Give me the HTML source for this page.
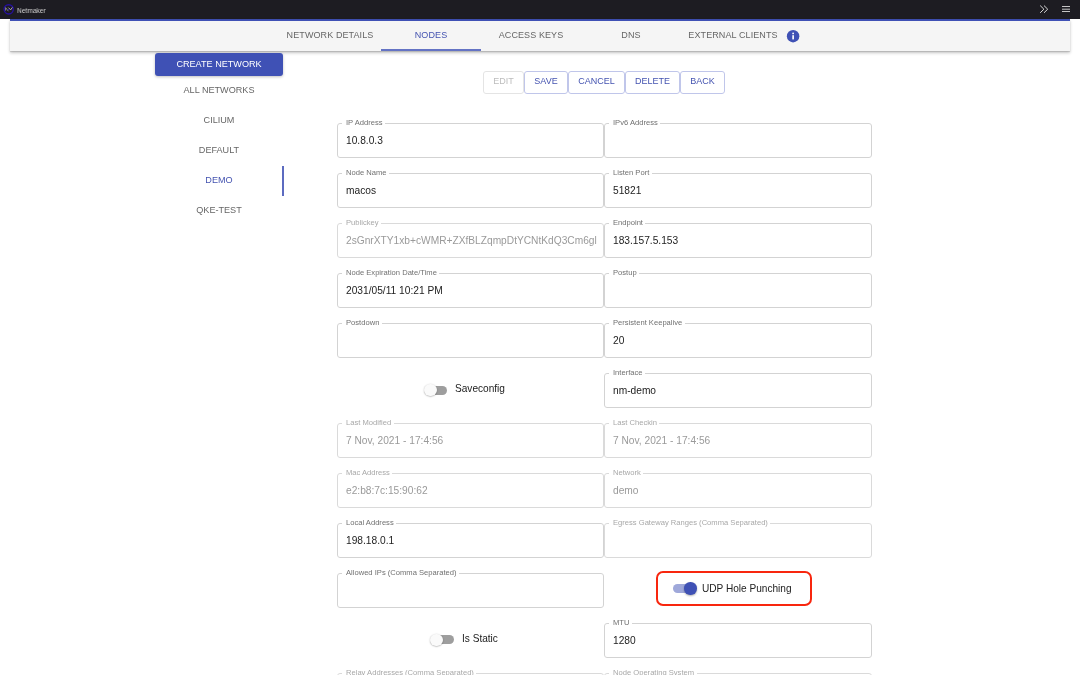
<!DOCTYPE html>
<html><head><meta charset="utf-8">
<style>
*{box-sizing:border-box;margin:0;padding:0}
html,body{width:1080px;height:675px;overflow:hidden;background:#fff;font-family:"Liberation Sans",sans-serif;position:relative}
.fld,.tab,.side,.btn,.swlbl,#brand,#createbtn{will-change:transform}
.abs{position:absolute}
#topbar{left:0;top:0;width:1080px;height:18.8px;background:#1d1c22}
#brand{left:17px;top:5.5px;font-size:7.8px;color:#d0d0d0;line-height:10px;transform:scaleX(0.85);transform-origin:0 0}
#tabs{left:10px;top:18.7px;width:1060px;height:32.3px;background:linear-gradient(#3a4aa8 0px,#3f51b5 1.2px,#3f51b5 1.6px,#f5f5f5 2.4px);box-shadow:0 2px 3px rgba(0,0,0,0.22),0 1px 1px rgba(0,0,0,0.12)}
.tab{position:absolute;top:12px;font-size:9px;line-height:10px;color:#666;letter-spacing:0.1px;white-space:nowrap;text-align:center}
#ul{left:381px;top:49px;width:100px;height:2px;background:#6473c4}
#createbtn{left:155px;top:53px;width:128px;height:22.7px;background:#3f51b5;border-radius:3px;color:#fff;font-size:9.1px;line-height:22.4px;text-align:center;box-shadow:0 1px 3px rgba(0,0,0,0.25)}
.side{position:absolute;left:155px;width:128px;text-align:center;font-size:9.1px;color:#666;line-height:10px}
#ind{left:282px;top:166px;width:2px;height:30px;background:#5c6bc0}
.btn{position:absolute;top:71px;height:23px;border:1px solid #c0c6ea;border-radius:3px;color:#4453b0;font-size:9px;line-height:19.6px;text-align:center}
.btn.dis{border-color:#e4e4e4;color:#bdbdbd}
.fld{position:absolute;height:35px;border:1px solid #d3d3d3;border-radius:3px}
.fld .lb{position:absolute;left:4px;top:-6px;padding:0 2.5px 0 4px;background:#fff;font-size:7.6px;line-height:9px;color:#707070;white-space:nowrap}
.fld .v{position:absolute;left:8px;top:11px;font-size:10.2px;line-height:12px;color:#222;white-space:nowrap}
.fld.dis{border-color:#dadada}
.fld.dis .lb{color:#a8a8a8}
.fld.dis .v{color:#9a9a9a}
.L{left:337px;width:267px}
.R{left:604px;width:268px}
.sw{position:absolute}
.sw .tr{position:absolute;height:9px;border-radius:5px}
.sw .th{position:absolute;width:12.5px;height:12.5px;border-radius:50%}
.swlbl{position:absolute;font-size:10.1px;line-height:12px;color:#222;white-space:nowrap}
</style></head><body>
<div id="topbar" class="abs"></div>
<svg class="abs" style="left:0;top:0" width="18" height="18" viewBox="0 0 18 18">
  <circle cx="8.7" cy="9.35" r="4.6" fill="none" stroke="#2610a0" stroke-width="1.4"/>
  <path d="M5.6 10.6 L5.6 7.6 L8.4 11.2" fill="none" stroke="#8a8a8a" stroke-width="0.9"/>
  <path d="M8.4 7.6 L10.6 9.9 L12.4 7.4" fill="none" stroke="#b8b8b8" stroke-width="0.9"/>
  <circle cx="8.6" cy="9.5" r="0.8" fill="#2610a0"/>
</svg>
<div id="brand" class="abs">Netmaker</div>
<svg class="abs" style="left:1038px;top:4px" width="12" height="11" viewBox="0 0 12 11">
  <path d="M2.2 1.6 L5.9 5.2 L2.2 8.8 M6 1.6 L9.7 5.2 L6 8.8" fill="none" stroke="#e0e0e0" stroke-width="0.95"/>
</svg>
<svg class="abs" style="left:1061px;top:4px" width="10" height="10" viewBox="0 0 10 10">
  <path d="M1 2.5 H9 M1 5.2 H9 M1 7.5 H9" fill="none" stroke="#d8d8d8" stroke-width="0.9"/>
</svg>

<div id="tabs" class="abs"></div>
<div class="tab" style="left:280px;top:30px;width:100px">NETWORK DETAILS</div>
<div class="tab" style="left:381px;top:30px;width:100px;color:#4453b0">NODES</div>
<div class="tab" style="left:481px;top:30px;width:100px">ACCESS KEYS</div>
<div class="tab" style="left:581px;top:30px;width:100px">DNS</div>
<div class="tab" style="left:681px;top:30px;width:104px">EXTERNAL CLIENTS</div>
<svg class="abs" style="left:786px;top:28.5px" width="14" height="14" viewBox="0 0 14 14">
  <circle cx="7.1" cy="7.2" r="6.25" fill="#3f51b5"/>
  <rect x="6.3" y="6.2" width="1.65" height="4.2" fill="#fff"/>
  <circle cx="7.12" cy="4.4" r="0.9" fill="#fff"/>
</svg>
<div id="ul" class="abs"></div>

<div id="createbtn" class="abs">CREATE NETWORK</div>
<div class="side" style="top:85px">ALL NETWORKS</div>
<div class="side" style="top:115px">CILIUM</div>
<div class="side" style="top:145px">DEFAULT</div>
<div class="side" style="top:175px;color:#4453b0">DEMO</div>
<div class="side" style="top:205px">QKE-TEST</div>
<div id="ind" class="abs"></div>

<div class="btn dis" style="left:483px;width:41px">EDIT</div>
<div class="btn" style="left:524px;width:44px">SAVE</div>
<div class="btn" style="left:568px;width:57px">CANCEL</div>
<div class="btn" style="left:625px;width:55px">DELETE</div>
<div class="btn" style="left:680px;width:45px">BACK</div>

<!-- fields -->
<div class="fld L" style="top:123px"><span class="lb">IP Address</span><span class="v">10.8.0.3</span></div>
<div class="fld R" style="top:123px"><span class="lb">IPv6 Address</span></div>
<div class="fld L" style="top:173px"><span class="lb">Node Name</span><span class="v">macos</span></div>
<div class="fld R" style="top:173px"><span class="lb">Listen Port</span><span class="v">51821</span></div>
<div class="fld L dis" style="top:223px"><span class="lb">Publickey</span><span class="v">2sGnrXTY1xb+cWMR+ZXfBLZqmpDtYCNtKdQ3Cm6gl</span></div>
<div class="fld R" style="top:223px"><span class="lb">Endpoint</span><span class="v">183.157.5.153</span></div>
<div class="fld L" style="top:273px"><span class="lb">Node Expiration Date/Time</span><span class="v">2031/05/11 10:21 PM</span></div>
<div class="fld R" style="top:273px"><span class="lb">Postup</span></div>
<div class="fld L" style="top:323px"><span class="lb">Postdown</span></div>
<div class="fld R" style="top:323px"><span class="lb">Persistent Keepalive</span><span class="v">20</span></div>
<div class="fld R" style="top:373px"><span class="lb">Interface</span><span class="v">nm-demo</span></div>
<div class="fld L dis" style="top:423px"><span class="lb">Last Modified</span><span class="v">7 Nov, 2021 - 17:4:56</span></div>
<div class="fld R dis" style="top:423px"><span class="lb">Last Checkin</span><span class="v">7 Nov, 2021 - 17:4:56</span></div>
<div class="fld L dis" style="top:473px"><span class="lb">Mac Address</span><span class="v">e2:b8:7c:15:90:62</span></div>
<div class="fld R dis" style="top:473px"><span class="lb">Network</span><span class="v">demo</span></div>
<div class="fld L" style="top:523px"><span class="lb">Local Address</span><span class="v">198.18.0.1</span></div>
<div class="fld R dis" style="top:523px"><span class="lb">Egress Gateway Ranges (Comma Separated)</span></div>
<div class="fld L" style="top:573px"><span class="lb">Allowed IPs (Comma Separated)</span></div>
<div class="fld R" style="top:623px"><span class="lb">MTU</span><span class="v">1280</span></div>
<div class="fld L dis" style="top:673px"><span class="lb">Relay Addresses (Comma Separated)</span></div>
<div class="fld R dis" style="top:673px"><span class="lb">Node Operating System</span></div>

<!-- switches -->
<div class="sw" style="left:424px;top:383.8px">
  <div class="tr" style="left:2px;top:1.8px;width:21.4px;background:#9e9e9e"></div>
  <div class="th" style="left:0;top:0;background:#fafafa;box-shadow:0 0.5px 1.5px rgba(0,0,0,0.35)"></div>
</div>
<div class="swlbl" style="left:455px;top:382.5px">Saveconfig</div>

<div class="abs" style="left:656px;top:571px;width:156px;height:35px;border:2px solid #f8260e;border-radius:7px"></div>
<div class="sw" style="left:673px;top:582px">
  <div class="tr" style="left:0;top:1.8px;width:22.4px;background:#9fa8da"></div>
  <div class="th" style="left:11px;top:0;background:#3f51b5;box-shadow:0 1px 2px rgba(0,0,0,0.3)"></div>
</div>
<div class="swlbl" style="left:702px;top:582.5px">UDP Hole Punching</div>

<div class="sw" style="left:430px;top:633.5px">
  <div class="tr" style="left:2px;top:1.8px;width:22.2px;background:#9e9e9e"></div>
  <div class="th" style="left:0;top:0;background:#fafafa;box-shadow:0 0.5px 1.5px rgba(0,0,0,0.35)"></div>
</div>
<div class="swlbl" style="left:462px;top:632.5px">Is Static</div>
</body></html>
